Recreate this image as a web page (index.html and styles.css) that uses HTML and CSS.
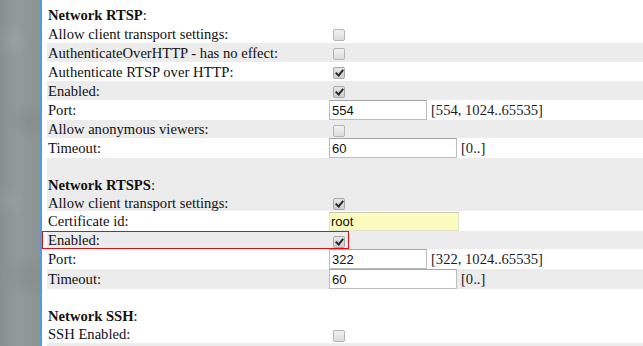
FILE: index.html
```html
<!DOCTYPE html>
<html lang="en">
<head>
    <meta charset="UTF-8">
    <title>Network settings</title>
    <link rel="stylesheet" href="styles.css">
</head>
<body>
    <div class="side"></div>
    <div class="edge"></div>
    <div class="main">
        <table class="settings">
            <!-- RTSP -->
            <tr class="h18"><td class="label"><b>Network RTSP</b>:</td><td></td></tr>
            <tr class="h19"><td class="label">Allow client transport settings:</td><td><span class="cb"></span></td></tr>
            <tr class="h19 alt"><td class="label">AuthenticateOverHTTP - has no effect:</td><td><span class="cb"></span></td></tr>
            <tr class="h19"><td class="label">Authenticate RTSP over HTTP:</td><td><span class="cb on"></span></td></tr>
            <tr class="h19 alt"><td class="label">Enabled:</td><td><span class="cb on"></span></td></tr>
            <tr class="h20"><td class="label">Port:</td><td><input class="field short" type="text" value="554"><span class="range">[554, 1024..65535]</span></td></tr>
            <tr class="h18 alt"><td class="label">Allow anonymous viewers:</td><td><span class="cb"></span></td></tr>
            <tr class="h20"><td class="label">Timeout:</td><td><input class="field long" type="text" value="60"><span class="range">[0..]</span></td></tr>
            <tr class="h18 alt"><td colspan="2"></td></tr>

            <!-- RTSPS -->
            <tr class="h18 alt"><td class="label"><b>Network RTSPS</b>:</td><td></td></tr>
            <tr class="h17 alt"><td class="label">Allow client transport settings:</td><td><span class="cb on"></span></td></tr>
            <tr class="h20"><td class="label">Certificate id:</td><td><input class="field long cert" type="text" value="root"></td></tr>
            <tr class="h18 alt"><td class="label marked">Enabled:</td><td><span class="cb on"></span></td></tr>
            <tr class="h20"><td class="label">Port:</td><td><input class="field short" type="text" value="322"><span class="range">[322, 1024..65535]</span></td></tr>
            <tr class="h19 alt"><td class="label">Timeout:</td><td><input class="field long" type="text" value="60"><span class="range">[0..]</span></td></tr>
            <tr class="h18"><td colspan="2"></td></tr>

            <!-- SSH -->
            <tr class="h18"><td class="label"><b>Network SSH</b>:</td><td></td></tr>
            <tr class="h18"><td class="label">SSH Enabled:</td><td><span class="cb"></span></td></tr>
            <tr class="h18 alt"><td colspan="2"></td></tr>
        </table>
    </div>
</body>
</html>
```

FILE: styles.css
```css
html, body {
    margin: 0;
    height: 100%;
    overflow: hidden;
}
body {
    display: flex;
    background-color: white;
    font-family: "Liberation Serif", "Times New Roman", serif;
    font-size: 14.6px;
    color: #111;
}
.side {
    width: 40px;
    flex-shrink: 0;
    background-color: #8d9595;
    background-image:
        radial-gradient(circle at 30% 12%, rgba(255,255,255,0.08), transparent 18px),
        radial-gradient(circle at 70% 35%, rgba(0,0,0,0.06), transparent 20px),
        radial-gradient(circle at 25% 58%, rgba(255,255,255,0.07), transparent 16px),
        radial-gradient(circle at 65% 80%, rgba(0,0,0,0.05), transparent 22px),
        linear-gradient(90deg, #879090, #939b9a 45%, #8a9292);
}
.edge {
    width: 2px;
    flex-shrink: 0;
    background-color: #4f9de0;
}
.main {
    flex: 1;
    padding: 6px 0 0 5px;
}
.settings {
    width: 100%;
    border-collapse: collapse;
}
.settings td {
    padding: 0;
    vertical-align: middle;
    white-space: nowrap;
    line-height: 16px;
}
.settings td.label {
    width: 281px;
    padding-left: 1px;
}
.settings tr.alt {
    background-color: #ececec;
}
.h17 td { height: 17px; }
.h18 td { height: 18px; }
.h19 td { height: 19px; }
.h20 td { height: 20px; }

.marked {
    position: relative;
}
.marked::after {
    content: "";
    position: absolute;
    left: -5px;
    top: 0;
    width: 305px;
    height: 16px;
    border: 1px solid #e01010;
}

.cb {
    display: inline-block;
    vertical-align: middle;
    width: 10px;
    height: 10px;
    margin-left: 4px;
    border: 1px solid #b4b4b4;
    border-radius: 2px;
    background: linear-gradient(#f2f2f2, #dcdcdc);
    position: relative;
}
.cb.on {
    border-color: #a8a8a8;
    background: linear-gradient(#e6e6e6, #cfcfcf);
}
.cb.on::after {
    content: "";
    position: absolute;
    left: 3px;
    top: 0px;
    width: 3px;
    height: 6px;
    border: solid #2a2a2a;
    border-width: 0 2px 2px 0;
    transform: rotate(40deg);
}

.field {
    box-sizing: border-box;
    height: 20px;
    margin: 0;
    padding: 1px 2px;
    border: 1px solid #bdbdbd;
    border-top-color: #a6a6a6;
    font-family: "Liberation Sans", Arial, sans-serif;
    font-size: 13px;
    color: #111;
    background: white;
    vertical-align: middle;
}
.field.short {
    width: 98px;
}
.field.long {
    width: 128px;
}
.field.cert {
    width: 130px;
    height: 19px;
    background-color: #fbfbbd;
    border-color: #e4e4c8;
    border-top-color: #c8c8b0;
    padding-left: 1px;
}
.range {
    margin-left: 4px;
    vertical-align: middle;
    color: #1a1a2a;
}
```
